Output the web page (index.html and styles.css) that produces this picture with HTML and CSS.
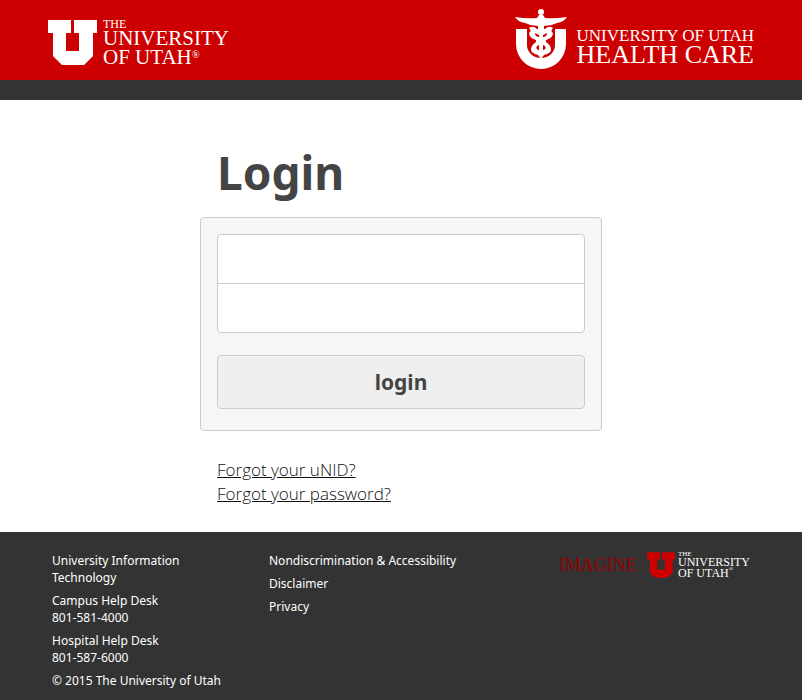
FILE: index.html
```
<!DOCTYPE html>
<html lang="en">
<head>
<meta charset="utf-8">
<meta name="viewport" content="width=device-width, initial-scale=1">
<title>Login</title>
<link rel="stylesheet" href="styles.css">
</head>
<body>
<svg class="symbols" aria-hidden="true">
  <symbol id="block-u" viewBox="0 0 49 45">
    <path d="M0 0H23V13H18V31H31V13H26V0H49V13H45V36L36 45H14L5 36V13H0Z"/>
  </symbol>
</svg>
<header class="header">
  <a class="brand" href="#">
    <svg class="brand-mark" aria-hidden="true"><use href="#block-u"/></svg>
    <span class="brand-name"><span class="brand-the">THE</span><span>UNIVERSITY</span><span>OF UTAH<sup>®</sup></span></span>
  </a>
  <a class="health" href="#">
    <svg class="health-mark" viewBox="0 0 52 60" aria-hidden="true">
      <path d="M1 20H12V36A14 13 0 0 0 40 36V20H51V35A25 25 0 0 1 1 35Z"/>
      <circle cx="26" cy="3" r="3"/>
      <path d="M0 8Q12 10 22 9L24 6H28L30 9Q40 10 52 8Q49 13 42 14Q36 17 29 17V21H23V17Q16 17 10 14Q3 13 0 8Z"/>
      <path d="M14 19Q18 16 22 20H30Q34 16 38 19Q35 22 38 24Q38 29 31 31V33Q36 36 36 41Q36 44 29 46L26 50L23 46Q16 44 16 41Q16 36 21 33V31Q14 29 14 24Q17 22 14 19Z"/>
      <path class="cutout" d="M20 24L24 26V28Q20 28 20 24ZM32 24L28 26V28Q32 28 32 24ZM24 36V41Q20 40 22 37ZM28 36V41Q32 40 30 37Z"/>
    </svg>
    <span class="health-name"><span>UNIVERSITY OF UTAH</span><span class="health-care">HEALTH CARE</span></span>
  </a>
</header>
<main class="main">
  <h1>Login</h1>
  <form class="card">
    <div class="fields">
      <input type="text" name="username" aria-label="uNID" autocomplete="username">
      <input type="password" name="password" aria-label="Password" autocomplete="current-password">
    </div>
    <button type="submit">login</button>
  </form>
  <nav class="help">
    <a href="#">Forgot your uNID?</a>
    <a href="#">Forgot your password?</a>
  </nav>
</main>
<footer class="footer">
  <div class="column">
    <p>University Information<br>Technology</p>
    <p>Campus Help Desk<br>801-581-4000</p>
    <p>Hospital Help Desk<br>801-587-6000</p>
    <p class="copyright">© 2015 The University of Utah</p>
  </div>
  <nav class="column">
    <a href="#">Nondiscrimination &amp; Accessibility</a>
    <a href="#">Disclaimer</a>
    <a href="#">Privacy</a>
  </nav>
  <a class="imagine" href="#">
    <span class="imagine-word">IMAGINE</span>
    <svg class="imagine-mark" aria-hidden="true"><use href="#block-u"/></svg>
    <span class="imagine-name"><span class="imagine-the">THE</span><span>UNIVERSITY</span><span>OF UTAH<sup>®</sup></span></span>
  </a>
</footer>
</body>
</html>
```
FILE: styles.css
```
* { box-sizing: border-box; }
body {
  margin: 0;
  min-height: 100vh;
  display: flex;
  flex-direction: column;
  background: #fff;
  color: #444;
  font: 16px/24px "Noto Sans", "Open Sans", sans-serif;
}
.symbols { display: none; }
svg { flex: none; fill: currentColor; }
sup { font-size: 50%; line-height: 0; vertical-align: 6px; }

.header {
  display: flex;
  justify-content: space-between;
  align-items: flex-start;
  padding: 9px 48px 11px;
  background: #c00;
  border-bottom: 20px solid #333;
  font-family: "Liberation Serif", serif;
}
.header a { display: flex; color: #fff; text-decoration: none; }
.brand { gap: 6px; padding-top: 11px; }
.brand-mark { width: 49px; height: 45px; }
.brand-name, .health-name, .imagine-name { display: flex; flex-direction: column; white-space: nowrap; }
.brand-name { font-size: 21px; line-height: 19px; }
.brand-the { font-size: 12px; line-height: 9px; }
.health { gap: 10px; }
.health-mark { width: 52px; height: 60px; }
.health-name { padding-top: 17px; font-size: 17px; line-height: 20px; }
.health-care { font-size: 26px; line-height: 18px; }
.cutout { fill: #c00; }

.main { width: 100%; max-width: 402px; margin: 0 auto; padding: 40px 0 26px; }
h1 { margin: 0 17px 13px; font-size: 46px; line-height: 64px; }
.card {
  padding: 16px 16px 21px;
  background: #f6f6f6;
  border: 1px solid #ccc;
  border-radius: 4px;
}
.fields { margin-bottom: 22px; background: #fff; border: 1px solid #ccc; border-radius: 4px; }
.fields input {
  display: block;
  width: 100%;
  height: 48px;
  padding: 0 12px;
  border: 0;
  border-radius: 4px;
  background: transparent;
  font: inherit;
}
.fields input + input { height: 49px; border-top: 1px solid #ccc; border-radius: 0; }
button {
  display: block;
  width: 100%;
  height: 54px;
  border: 1px solid #ccc;
  border-radius: 4px;
  background: #efefef;
  color: #444;
  font: bold 21px/30px "Noto Sans", "Open Sans", sans-serif;
}
.help { display: flex; flex-direction: column; align-items: flex-start; padding: 27px 17px 0; }
.help a { color: #111; font-family: "Open Sans", "Noto Sans", sans-serif; font-size: 17px; font-weight: 300; }

.footer {
  flex: 1;
  display: grid;
  grid-template-columns: 177px 1fr auto;
  column-gap: 40px;
  padding: 20px 52px 10px;
  background: #333;
  color: #fff;
  font-size: 12px;
  line-height: 17px;
}
.column { display: flex; flex-direction: column; gap: 6px; }
.column p { margin: 0; }
.column a { color: #fff; text-decoration: none; }
.copyright { white-space: nowrap; }
.imagine {
  display: flex;
  align-self: start;
  color: #c00;
  text-decoration: none;
  font-family: "Liberation Serif", serif;
}
.imagine-word { margin-right: 10px; color: #900; font-size: 18px; line-height: 26px; }
.imagine-mark { width: 28px; height: 26px; }
.imagine-name { margin-left: 3px; color: #fff; font-size: 12px; line-height: 11px; }
.imagine-the { font-size: 7px; line-height: 5px; }
```
